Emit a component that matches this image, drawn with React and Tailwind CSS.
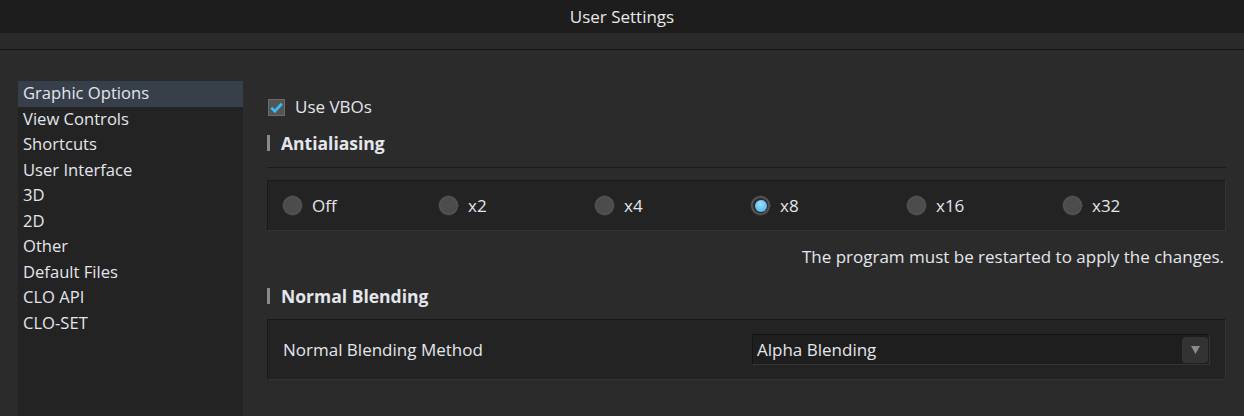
import React, { useState } from "react";

const menu = [
	"Graphic Options",
	"View Controls",
	"Shortcuts",
	"User Interface",
	"3D",
	"2D",
	"Other",
	"Default Files",
	"CLO API",
	"CLO-SET",
];

const levels = ["Off", "x2", "x4", "x8", "x16", "x32"];

function Radio({ checked }) {
	return (
		<span className="flex h-[21px] w-[21px] items-center justify-center rounded-full border border-[#2e2e2e] bg-[#4c4c4c] shadow-[inset_0_0_0_1px_#5c5c5c]">
			{checked && (
				<span className="flex h-[15px] w-[15px] items-center justify-center rounded-full bg-[#2c2c2c]">
					<span className="h-[12px] w-[12px] rounded-full bg-[radial-gradient(circle_at_45%_35%,#9fe0ff,#3aa9f2)]" />
				</span>
			)}
		</span>
	);
}

function Heading({ children }) {
	return (
		<div className="flex h-[20px] items-center">
			<span className="h-[16px] w-[3px] bg-[#8a8a8a]" />
			<span className="ml-[11px] text-[17.5px] font-bold text-[#e4e6ec]">{children}</span>
		</div>
	);
}

export default function App() {
	const [selected, setSelected] = useState(0);
	const [aa, setAa] = useState("x8");

	return (
		<div
			className="flex h-[416px] w-[1244px] flex-col overflow-hidden bg-[#2b2b2b] text-[#e4e6ec]"
			style={{ fontFamily: '"Open Sans", "Noto Sans", sans-serif' }}
		>
			<div className="flex h-[33px] items-center justify-center bg-[#1d1d1d] text-[17px] text-[#e8e8e8]">
				User Settings
			</div>
			<div className="h-[17px] border-b border-[#161616] bg-[#2a2a2a]" />

			<div className="flex flex-1">
				{/* side menu */}
				<div className="ml-[18px] mt-[31px] w-[225px] bg-[#232323]">
					{menu.map((m, i) => (
						<div
							key={m}
							onClick={() => setSelected(i)}
							className={`flex h-[25.5px] items-center pl-[5px] text-[16.6px] ${
								i === selected ? "bg-[#363f4a]" : ""
							}`}
						>
							{m}
						</div>
					))}
				</div>

				{/* content */}
				<div className="ml-[24px] mr-[18px] flex flex-1 flex-col pt-[47px]">
					<div className="flex h-[20px] items-center">
						<span className="ml-[1px] flex h-[17px] w-[17px] items-center justify-center border border-[#6a6a6a] bg-[#555]">
							<svg width="13" height="11" viewBox="0 0 13 11">
								<path d="M1.3 5.8 L4.8 9.2 L11.8 1.8" fill="none" stroke="#3cb8f6" strokeWidth="2.8" />
							</svg>
						</span>
						<span className="ml-[10px] text-[17px]">Use VBOs</span>
					</div>

					<div className="mt-[16px]">
						<Heading>Antialiasing</Heading>
					</div>
					<div className="mt-[14px] h-px bg-[#1b1b1b]" />

					<div className="mt-[12px] flex h-[51px] items-center border-b border-l border-r border-t border-b-[#343434] border-l-[#191919] border-r-[#343434] border-t-[#191919] bg-[#232323] pl-[14px]">
						{levels.map((l) => (
							<div
								key={l}
								onClick={() => setAa(l)}
								className="flex w-[156px] items-center"
							>
								<Radio checked={aa === l} />
								<span className="ml-[9px] text-[17px]">{l}</span>
							</div>
						))}
					</div>

					<div className="mt-[16px] flex h-[20px] items-center justify-end pr-[2px] text-[17px]">
						The program must be restarted to apply the changes.
					</div>

					<div className="mt-[19px]">
						<Heading>Normal Blending</Heading>
					</div>

					<div className="mt-[13px] flex h-[61px] items-center border-b border-l border-r border-t border-b-[#343434] border-l-[#191919] border-r-[#343434] border-t-[#191919] bg-[#232323] pl-[15px] pr-[15px]">
						<span className="w-[469px] text-[17px]">Normal Blending Method</span>
						<div className="flex h-[31px] flex-1 items-center border-b border-l border-r border-t border-b-[#353535] border-l-[#141414] border-r-[#353535] border-t-[#141414] bg-[#1e1e1e] pl-[4px] pr-[1px]">
							<span className="flex-1 text-[17px]">Alpha Blending</span>
							<span className="flex h-[26px] w-[26px] items-center justify-center rounded-[4px] bg-[#333]">
								<svg width="9" height="8" viewBox="0 0 9 8">
									<path d="M0 0 L9 0 L4.5 8 Z" fill="#8a8a8a" />
								</svg>
							</span>
						</div>
					</div>
				</div>
			</div>
		</div>
	);
}
